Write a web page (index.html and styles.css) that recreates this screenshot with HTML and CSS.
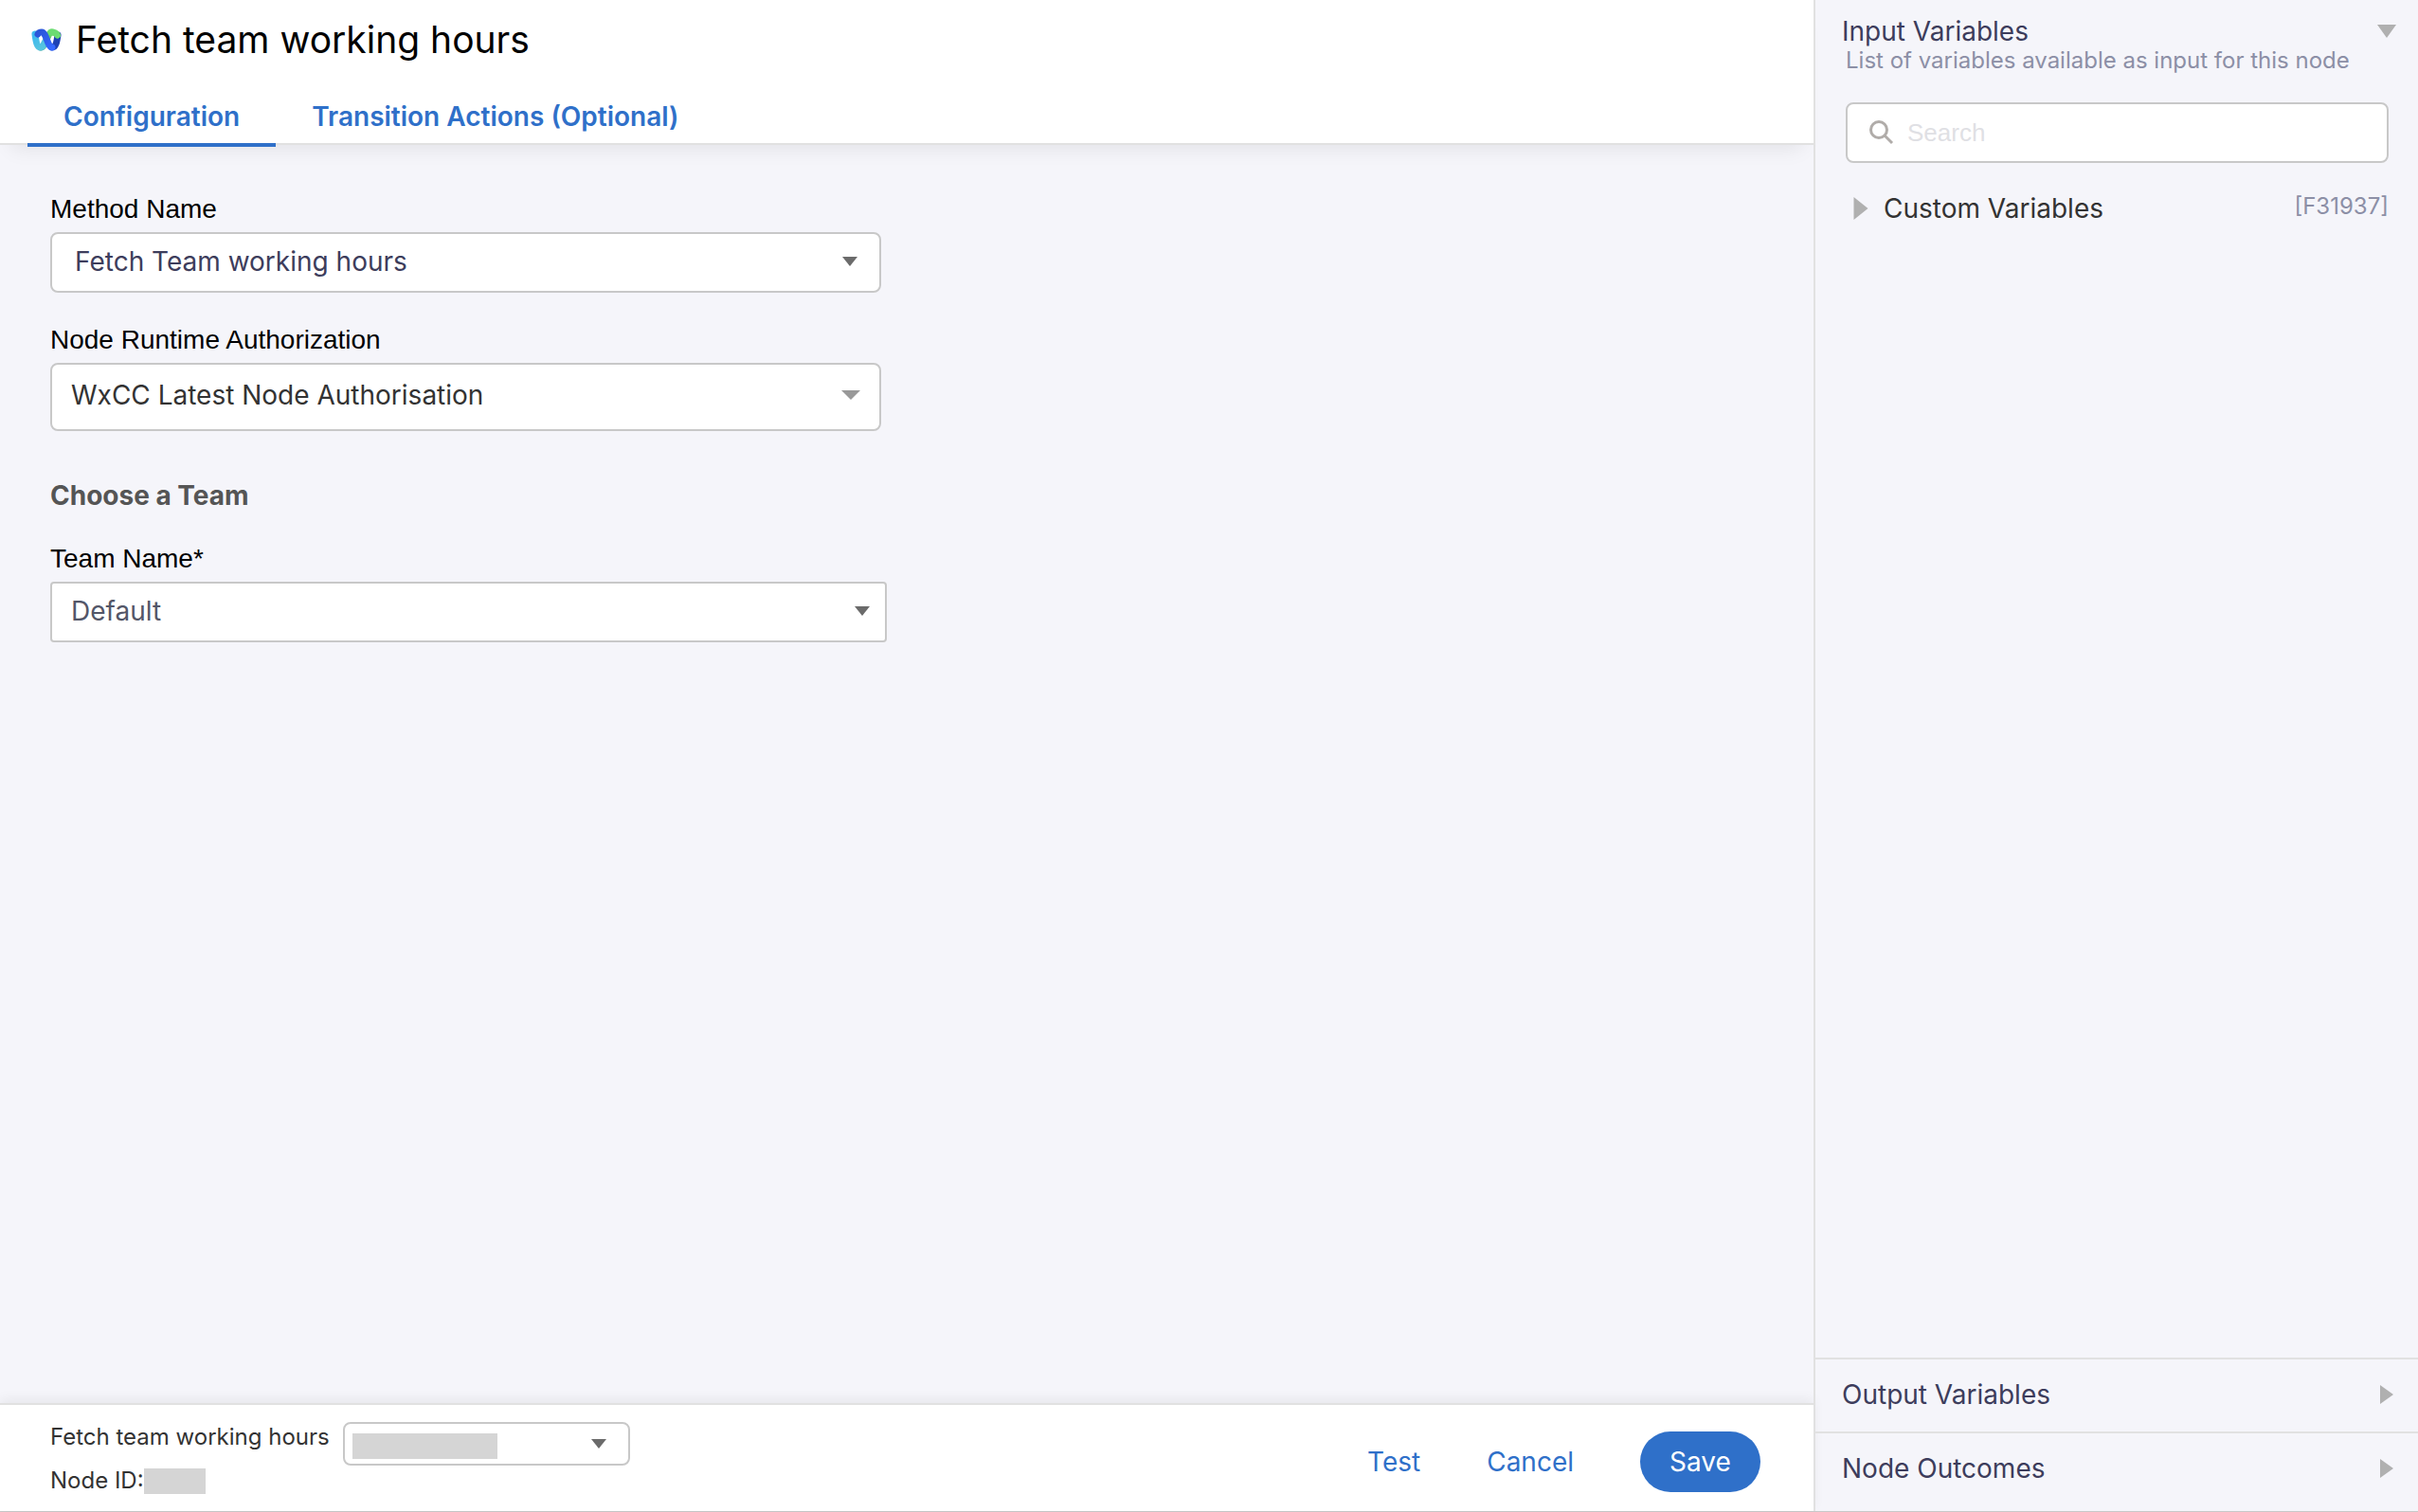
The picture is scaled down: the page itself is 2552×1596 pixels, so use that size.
FILE: index.html
```html
<!DOCTYPE html>
<html lang="en">
<head>
<meta charset="utf-8">
<title>Fetch team working hours</title>
<link rel="stylesheet" href="styles.css">
</head>
<body>
<div class="app">
  <main class="editor">
    <header class="editor-head">
      <div class="title-row">
        <svg class="logo" viewBox="0 0 32 24" aria-hidden="true">
          <defs>
            <linearGradient id="cyan" x1="0" y1="0" x2="0.6" y2="1"><stop offset="0" stop-color="#3cb8f0"/><stop offset="1" stop-color="#55c4e0"/></linearGradient>
            <linearGradient id="green" x1="1" y1="0" x2="0" y2="1"><stop offset="0" stop-color="#6fdc6c"/><stop offset="1" stop-color="#2f8f70"/></linearGradient>
            <linearGradient id="blue" x1="0" y1="0" x2="1" y2="1"><stop offset="0" stop-color="#2a55d8"/><stop offset="1" stop-color="#3468ff"/></linearGradient>
          </defs>
          <g fill="none" stroke-width="7" stroke-linecap="round">
            <path d="M10 20C15 20 17 4 22 4" stroke="url(#green)"/>
            <path d="M4 6C5 14 6 20 10 20C12 20 13 18 14 15" stroke="url(#cyan)"/>
            <path d="M28 7C27 14 26 20 22 20" stroke="#1d41b4"/>
            <path d="M21 4C25 4 26.500 5 27.500 7" stroke="#6bdc72"/>
            <path d="M7 6C8 4 9 4 11 4C16 4 17 20 22 20" stroke="url(#blue)"/>
          </g>
        </svg>
        <h1 class="title">Fetch team working hours</h1>
      </div>
      <nav class="tabs" aria-label="Node sections">
        <a class="tab tab-active" href="#configuration">Configuration</a>
        <a class="tab" href="#transitions">Transition Actions (Optional)</a>
      </nav>
    </header>

    <form class="config" id="configuration">
      <div class="field">
        <label class="label" for="method">Method Name</label>
        <div class="select-wrap">
          <select class="select select-method" id="method"><option>Fetch Team working hours</option></select>
          <svg class="caret" viewBox="0 0 16 10" aria-hidden="true"><path d="M0 0H16L8 10Z"/></svg>
        </div>
      </div>
      <div class="field">
        <label class="label" for="auth">Node Runtime Authorization</label>
        <div class="select-wrap">
          <select class="select select-auth" id="auth"><option>WxCC Latest Node Authorisation</option></select>
          <svg class="caret caret-light" viewBox="0 0 20 10" aria-hidden="true"><path d="M0 0H20L10 10Z"/></svg>
        </div>
      </div>
      <h2 class="group-title">Choose a Team</h2>
      <div class="field field-team">
        <label class="label" for="team">Team Name*</label>
        <div class="select-wrap">
          <select class="select select-team" id="team"><option>Default</option></select>
          <svg class="caret" viewBox="0 0 16 10" aria-hidden="true"><path d="M0 0H16L8 10Z"/></svg>
        </div>
      </div>
    </form>

    <footer class="editor-foot">
      <div class="node-info">
        <div class="node-row">
          <label for="version">Fetch team working hours</label>
          <div class="select-wrap version-wrap">
            <select class="version" id="version"><option></option></select>
            <span class="mask mask-version"></span>
            <svg class="caret caret-version" viewBox="0 0 16 10" aria-hidden="true"><path d="M0 0H16L8 10Z"/></svg>
          </div>
        </div>
        <div class="node-id">Node ID:<span class="mask mask-id"></span></div>
      </div>
      <div class="actions">
        <button class="btn" type="button">Test</button>
        <button class="btn" type="button">Cancel</button>
        <button class="btn btn-primary" type="button">Save</button>
      </div>
    </footer>
  </main>

  <aside class="side">
    <section class="inputs">
      <button class="side-head" type="button">Input Variables
        <svg class="arrow-down" viewBox="0 0 20 14" aria-hidden="true"><path d="M0 0H20L10 14Z"/></svg>
      </button>
      <p class="side-note">List of variables available as input for this node</p>
      <div class="search">
        <svg class="search-icon" viewBox="0 0 26 26" aria-hidden="true"><circle cx="10" cy="10" r="8.500"/><path d="M16 16L24 24"/></svg>
        <input class="search-input" type="search" placeholder="Search" aria-label="Search variables">
      </div>
      <div class="var-row">
        <button class="var-toggle" type="button">
          <svg class="arrow-right arrow-tall" viewBox="0 0 15 24" aria-hidden="true"><path d="M0 0L15 12L0 24Z"/></svg>
          Custom Variables
        </button>
        <span class="var-tag">[F31937]</span>
      </div>
    </section>
    <button class="side-section" type="button">Output Variables
      <svg class="arrow-right" viewBox="0 0 14 20" aria-hidden="true"><path d="M0 0L14 10L0 20Z"/></svg>
    </button>
    <button class="side-section" type="button">Node Outcomes
      <svg class="arrow-right" viewBox="0 0 14 20" aria-hidden="true"><path d="M0 0L14 10L0 20Z"/></svg>
    </button>
  </aside>
</div>
</body>
</html>
```
FILE: styles.css
```css
* { box-sizing: border-box; }

body {
  margin: 0;
  background: #f5f5fa;
  color: #000;
  font: 28px/32px Inter, "Liberation Sans", sans-serif;
}

h1, h2, p { margin: 0; font-weight: 400; }

button, select, input { font: inherit; color: inherit; }
button { padding: 0; border: 0; background: none; cursor: pointer; }

.app {
  display: grid;
  grid-template-columns: 3fr 1fr;
  min-height: 100vh;
  border-bottom: 1px solid #c8c8c8;
}

.editor { display: flex; flex-direction: column; }

.editor-head {
  background: #fff;
  border-bottom: 2px solid #e1e1e1;
  box-shadow: 0 16px 20px -12px rgba(0, 0, 0, .08);
}

.title-row {
  display: flex;
  align-items: center;
  gap: 14px;
  padding: 18px 32px 0;
}

.logo { width: 34px; height: 24px; }
.title { font-size: 39px; line-height: 48px; }

.tabs { display: flex; padding: 29px 29px 0; }

.tab {
  height: 60px;
  margin-bottom: -4px;
  padding: 12px 38px 0;
  border-bottom: 4px solid transparent;
  color: #2f70c9;
  font-weight: 600;
  text-decoration: none;
}
.tab-active { border-color: #2f70c9; }

.config { flex: 1; padding: 52px 53px; }
.field { width: 877px; margin-bottom: 34px; }
.field-team { width: 883px; }
.label { display: block; margin-bottom: 8px; font-family: "Liberation Sans", Arial, sans-serif; }

.group-title {
  margin: 52px 0 35px;
  color: #555;
  font-size: 28px;
  font-weight: 700;
  line-height: 32px;
}

.select-wrap { display: grid; align-items: center; }
.select-wrap > * { grid-area: 1 / 1; }

.select {
  width: 100%;
  height: 64px;
  padding: 0 60px 2px 24px;
  appearance: none;
  border: 2px solid #c8c8c8;
  border-radius: 8px;
  background: #fff;
}
.select-method { color: #3d3d5c; }
.select-auth { height: 72px; padding: 0 60px 4px 20px; color: #333; }
.select-team { padding-left: 20px; border-radius: 4px; color: #535668; }

.caret {
  justify-self: end;
  width: 16px;
  height: 10px;
  margin: 0 25px 2px 0;
  fill: #6b6b6b;
  pointer-events: none;
}
.caret-light { width: 20px; margin: 0 22px 4px 0; fill: #999; }
.field-team .caret { margin-right: 18px; }
.caret-version { margin-bottom: 0; }

.editor-foot {
  display: flex;
  justify-content: space-between;
  padding: 18px 56px 16px 53px;
  border-top: 2px solid #e1e1e1;
  background: #fff;
  box-shadow: 0 -4px 12px rgba(0, 0, 0, .06);
}

.node-info { color: #333; font-size: 24px; line-height: 32px; }
.node-row { display: flex; gap: 14px; }
.node-id { display: flex; align-items: center; }

.version-wrap { width: 303px; }
.version {
  width: 100%;
  height: 46px;
  appearance: none;
  border: 2px solid #c8c8c8;
  border-radius: 8px;
  background: #fff;
}
.mask { background: #d5d5d5; }
.mask-version { width: 153px; height: 27px; margin: 4px 0 0 10px; pointer-events: none; }
.mask-id { width: 65px; height: 27px; }

.actions { display: flex; align-items: center; gap: 70px; padding-top: 6px; color: #2f70c9; }
.btn { height: 64px; }
.btn-primary { width: 127px; border-radius: 32px; background: #2f70c9; color: #fff; }

.side {
  display: flex;
  flex-direction: column;
  border-left: 2px solid #e1e1e1;
}

.inputs { flex: 1; padding: 17px 31px 0 28px; }

.side-head {
  display: flex;
  width: 100%;
  justify-content: space-between;
  align-items: center;
  color: #3d3d5c;
}
.arrow-down { width: 20px; height: 14px; margin-right: -8px; fill: #b0b0b0; }
.side-note { padding-left: 4px; color: #8c8fa6; font-size: 24px; line-height: 30px; }

.search {
  display: flex;
  align-items: center;
  gap: 14px;
  height: 64px;
  margin: 29px 0 0 4px;
  padding: 0 23px;
  border: 2px solid #c8c8c8;
  border-radius: 8px;
  background: #fff;
}
.search-icon { width: 26px; height: 26px; fill: none; stroke: #b0aca9; stroke-width: 3; }
.search-input {
  flex: 1;
  min-width: 0;
  padding: 0;
  border: 0;
  outline: 0;
  background: none;
  font-family: "Liberation Sans", Arial, sans-serif;
  font-size: 26px;
}
.search-input::placeholder { color: #dfe0e4; }

.var-row { display: flex; justify-content: space-between; margin-top: 32px; padding-left: 12px; }
.var-toggle { display: flex; align-items: center; gap: 16px; color: #333; }
.var-tag { color: #8c8fa6; font-size: 24px; line-height: 28px; }
.arrow-right { width: 14px; height: 20px; fill: #b0b0b0; }
.arrow-tall { width: 16px; height: 24px; }

.side-section {
  display: flex;
  justify-content: space-between;
  align-items: center;
  height: 78px;
  padding: 0 26px 2px 28px;
  border-top: 2px solid #e1e1e1;
  color: #3d3d5c;
}
.side-section:last-child { height: 84px; padding-bottom: 8px; }
```
